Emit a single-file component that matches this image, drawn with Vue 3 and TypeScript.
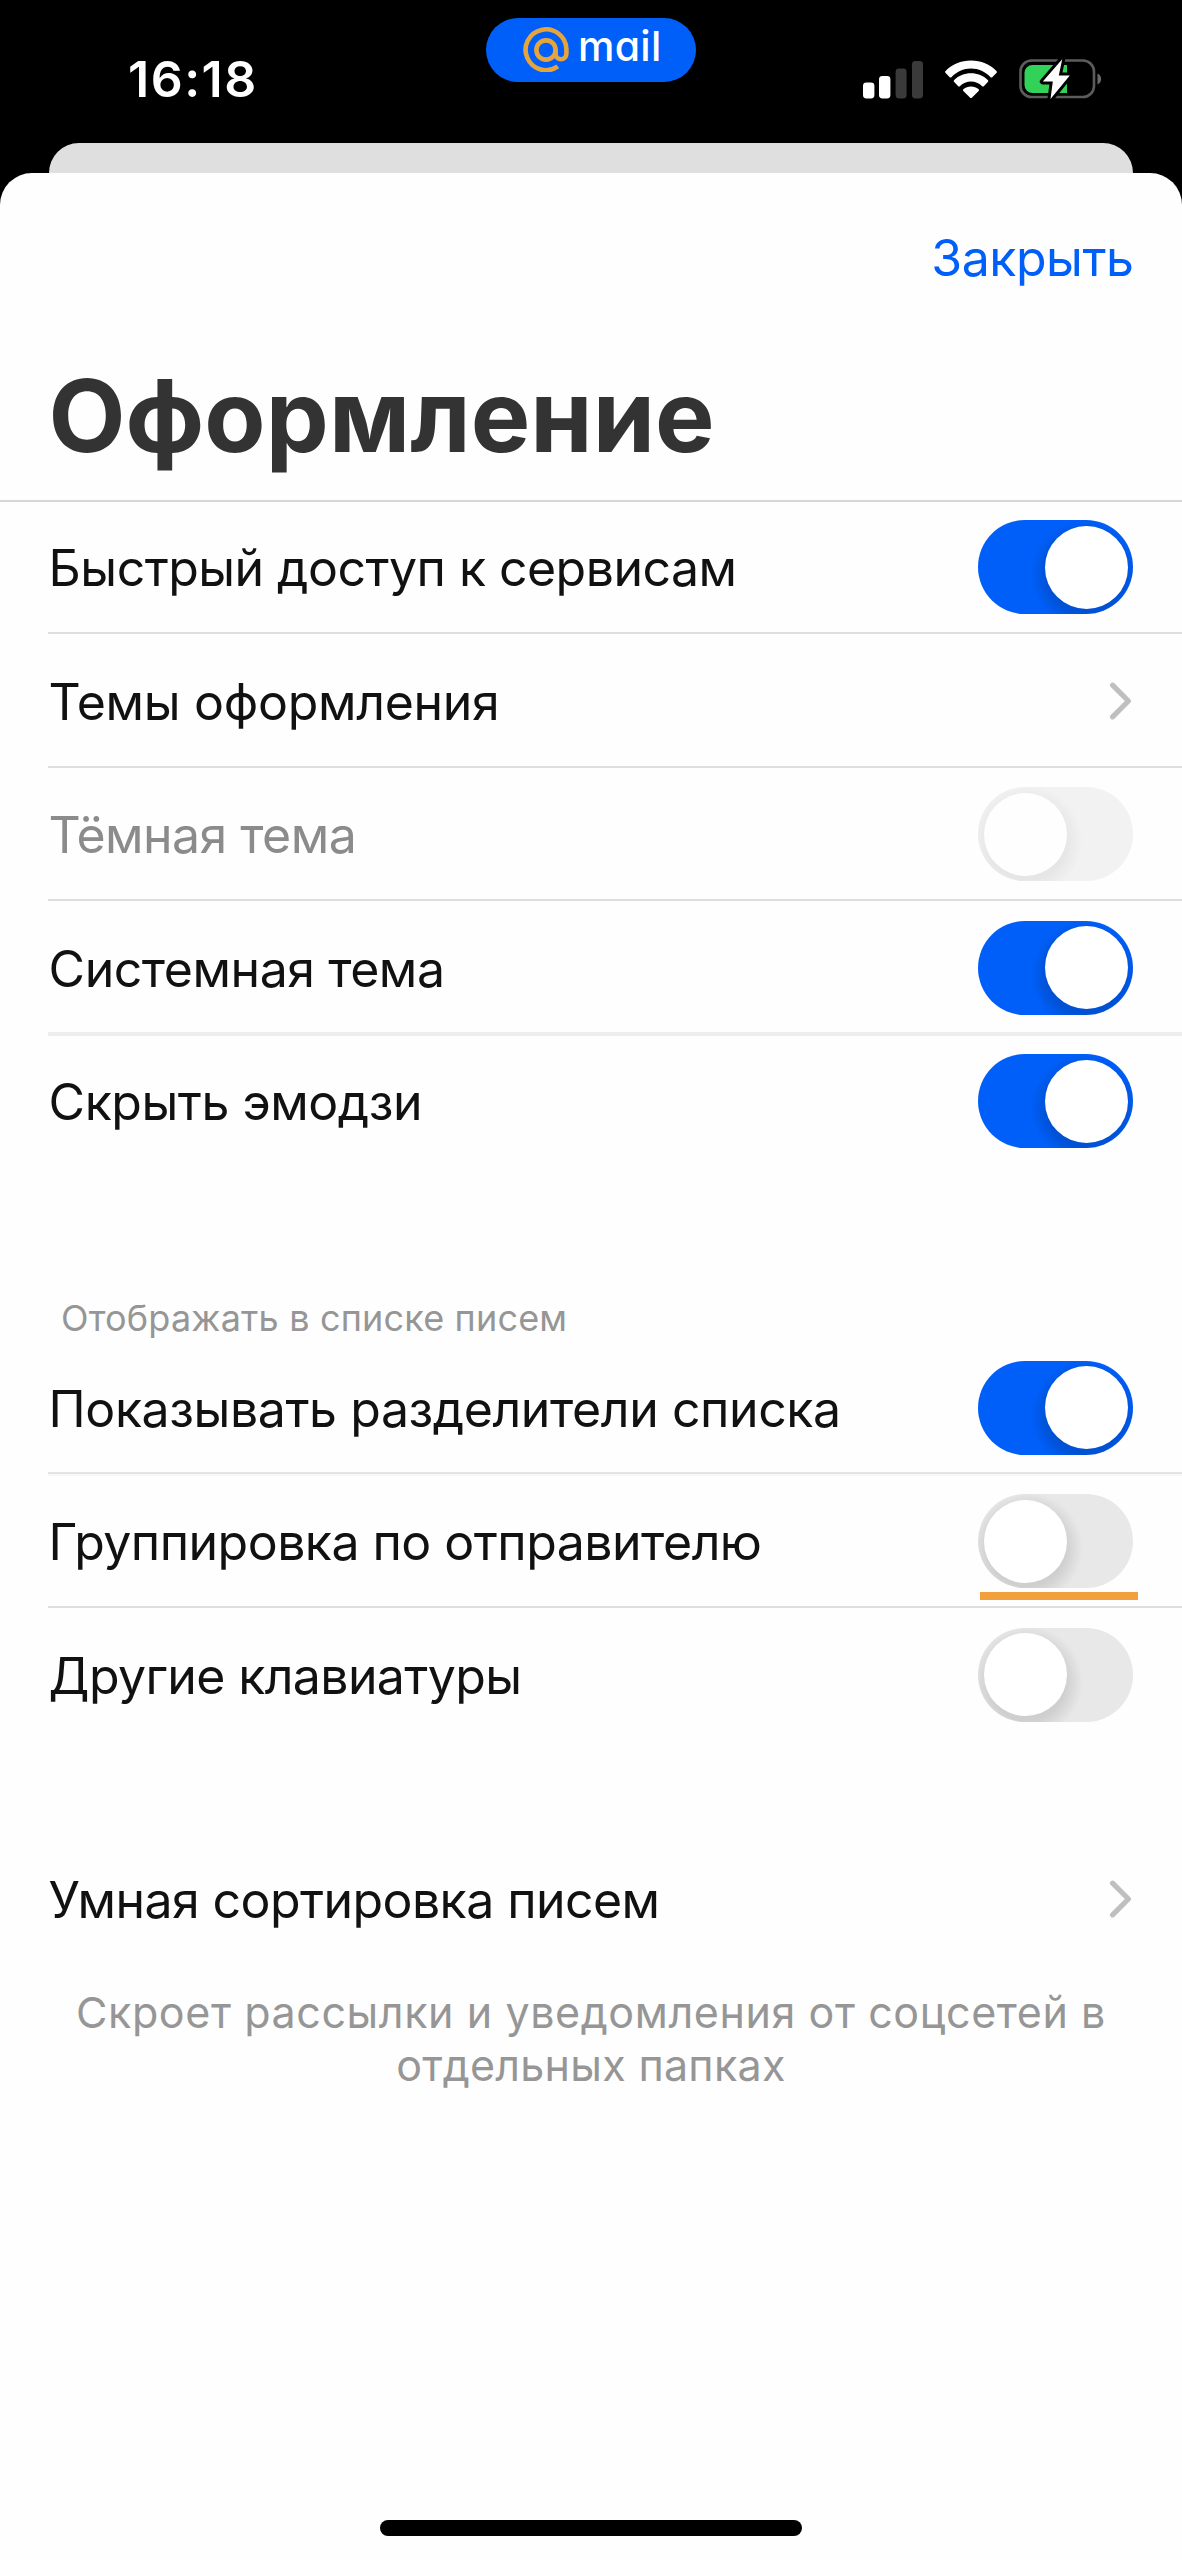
<script setup lang="ts">
import { reactive } from 'vue'

type Divider = 'thin' | 'soft' | 'faded' | 'none'

interface Row {
  label: string
  kind: 'toggle' | 'link'
  on?: boolean
  disabled?: boolean
  marked?: boolean
  divider: Divider
  tracking: number
}

const general = reactive<Row[]>([
  { label: 'Быстрый доступ к сервисам', kind: 'toggle', on: true, divider: 'thin', tracking: -0.54 },
  { label: 'Темы оформления', kind: 'link', divider: 'thin', tracking: -0.29 },
  { label: 'Тёмная тема', kind: 'toggle', on: false, disabled: true, divider: 'thin', tracking: -0.55 },
  { label: 'Системная тема', kind: 'toggle', on: true, divider: 'soft', tracking: -0.46 },
  { label: 'Скрыть эмодзи', kind: 'toggle', on: true, divider: 'none', tracking: -0.46 },
])

const list = reactive<Row[]>([
  { label: 'Показывать разделители списка', kind: 'toggle', on: true, divider: 'faded', tracking: -0.42 },
  { label: 'Группировка по отправителю', kind: 'toggle', on: false, marked: true, divider: 'thin', tracking: -0.53 },
  { label: 'Другие клавиатуры', kind: 'toggle', on: false, divider: 'none', tracking: -0.63 },
])

const sorting = reactive<Row[]>([
  { label: 'Умная сортировка писем', kind: 'link', divider: 'none', tracking: -0.57 },
])

const sections = [
  { id: 'general', caption: '', rows: general },
  { id: 'list', caption: 'Отображать в списке писем', rows: list },
  { id: 'sorting', caption: '', rows: sorting },
]

function flip(row: Row) {
  if (row.kind === 'toggle' && !row.disabled) row.on = !row.on
}
</script>

<template>
  <div class="phone">
    <header class="status">
      <span class="time">16:18</span>
      <div class="pill">
        <svg class="at" viewBox="0 0 46 46" fill="none" stroke="#e6a53c" stroke-width="4.6" stroke-linecap="butt">
          <circle cx="23" cy="24" r="9.6" />
          <path d="M32.6 24v3.8a5.4 5.4 0 0 0 10.8 0V23A20.4 20.4 0 1 0 34.8 40.4" />
        </svg>
        <span class="brand">mail</span>
      </div>
      <div class="indicators">
        <svg class="signal" viewBox="0 0 60 40">
          <rect x="0" y="23.5" width="11.4" height="16" rx="3.4" fill="#fff" />
          <rect x="16" y="17" width="11.4" height="22.5" rx="3.4" fill="#fff" />
          <rect x="32.6" y="9.5" width="11" height="30" rx="3.4" fill="#3a3a3a" />
          <rect x="49" y="2" width="11" height="37.5" rx="3.4" fill="#3a3a3a" />
        </svg>
        <svg class="wifi" viewBox="0 0 52 38" fill="#fff">
          <path d="M26 .6C16 .6 7 4.500 .6 10.900a1.500 1.500 0 0 0 0 2.100l3.900 3.900a1.500 1.500 0 0 0 2.100 0C11.700 11.900 18.500 8.600 26 8.600s14.300 3.300 19.400 8.300a1.500 1.500 0 0 0 2.100 0l3.900-3.900a1.500 1.500 0 0 0 0-2.100C45 4.500 36 .6 26 .6z" />
          <path d="M26 13.300c-6.500 0-12.400 2.500-16.800 6.600a1.500 1.500 0 0 0 0 2.200l3.800 3.800a1.500 1.500 0 0 0 2.100 0C18 23.200 21.800 21.600 26 21.600s8 1.600 10.900 4.300a1.500 1.500 0 0 0 2.100 0l3.800-3.800a1.500 1.500 0 0 0 0-2.200C38.400 15.800 32.500 13.300 26 13.300z" />
          <path d="M26 26.400c-3 0-5.400 .9-7.400 2.700a1.500 1.500 0 0 0 0 2.200l6.300 6.100a1.600 1.600 0 0 0 2.200 0l6.300-6.100a1.500 1.500 0 0 0 0-2.200C31.400 27.300 29 26.400 26 26.400z" />
        </svg>
        <svg class="battery" viewBox="0 0 84 44">
          <rect x="1.500" y="3.500" width="73.500" height="36.500" rx="11" fill="none" stroke="#5c5c5c" stroke-width="2.600" />
          <path d="M78.500 16.500c2.400 1 3.600 3 3.600 5.500s-1.200 4.500-3.600 5.500z" fill="#6a6a6a" />
          <path d="M13.500 8H48v28H13.500A8 8 0 0 1 5.500 28V16a8 8 0 0 1 8-8z" fill="#32d158" />
          <path d="M43.200 2.200 23.800 24.600h10L31.500 42 50.800 18.400h-11z" fill="#fff" stroke="#000" stroke-width="6" stroke-linejoin="round" paint-order="stroke" />
        </svg>
      </div>
    </header>

    <div class="behind"></div>

    <main class="sheet">
      <nav class="nav"><a class="close">Закрыть</a></nav>
      <h1 class="title">Оформление</h1>

      <section v-for="section in sections" :key="section.id" class="section" :class="section.id">
        <p v-if="section.caption" class="caption">{{ section.caption }}</p>
        <div
          v-for="row in section.rows"
          :key="row.label"
          class="row"
          :class="['divider-' + row.divider, { disabled: row.disabled }]"
          @click="flip(row)"
        >
          <span class="label" :style="{ letterSpacing: row.tracking + 'px' }">{{ row.label }}</span>
          <span v-if="row.kind === 'toggle'" class="toggle" :class="{ on: row.on, marked: row.marked }">
            <span class="knob"></span>
          </span>
          <svg v-else class="chevron" viewBox="0 0 24 40" fill="none" stroke="#bfbfbf" stroke-width="5.200" stroke-linecap="round" stroke-linejoin="round">
            <path d="M3.600 4.200 19.400 20 3.600 35.800" />
          </svg>
        </div>
      </section>

      <p class="hint">
        <span class="hint-first">Скроет рассылки и уведомления от соцсетей в</span>
        <span class="hint-second">отдельных папках</span>
      </p>

      <div class="home"></div>
    </main>
  </div>
</template>

<style>
body {
  background: #000;
}
</style>

<style scoped>
.phone {
  width: 1182px;
  height: 2560px;
  overflow: hidden;
  display: flex;
  flex-direction: column;
  background: #000;
  font-family: Inter, 'Liberation Sans', sans-serif;
  color: #111;
}

.status {
  flex: none;
  display: flex;
  align-items: flex-start;
  height: 142.5px;
  padding: 0 80px 0 128px;
  box-sizing: border-box;
}
.time {
  width: 358px;
  padding-top: 49px;
  font-size: 50px;
  line-height: 60px;
  font-weight: 600;
  letter-spacing: 1.5px;
  color: #fff;
}
.pill {
  display: flex;
  width: 210px;
  height: 64px;
  margin-top: 18px;
  padding-left: 37px;
  box-sizing: border-box;
  border-radius: 32px;
  background: #005ff9;
}
.at {
  width: 46px;
  height: 46px;
  margin-top: 8px;
}
.brand {
  margin: 3px 0 0 9px;
  font-size: 41px;
  line-height: 50px;
  font-weight: 500;
  letter-spacing: 0.300px;
  font-feature-settings: 'cv11';
  color: #fff;
}
.indicators {
  display: flex;
  margin-left: auto;
}
.signal {
  width: 60px;
  height: 40px;
  margin: 58.500px 22px 0 0;
}
.wifi {
  width: 52px;
  height: 38px;
  margin: 59.500px 22px 0 0;
}
.battery {
  width: 84px;
  height: 44px;
  margin: 56.500px -1px 0 0;
}

.behind {
  flex: none;
  height: 62px;
  margin: 0 49px -32px;
  border-radius: 30px 30px 0 0;
  background: #dfdfdf;
}
.sheet {
  flex: 1;
  display: flex;
  flex-direction: column;
  border-radius: 32px 32px 0 0;
  background: #fefefe;
  z-index: 1;
}

.nav {
  display: flex;
  justify-content: flex-end;
  height: 170.500px;
  padding-right: 48.500px;
}
.close {
  font-size: 50px;
  line-height: 171px;
  letter-spacing: -0.480px;
  color: #005ff9;
}
.title {
  height: 159px;
  margin: 0 0 -1.500px;
  padding-left: 48.400px;
  box-sizing: border-box;
  border-bottom: 2px solid #d6d6d6;
  font-size: 100px;
  line-height: 145px;
  font-weight: 700;
  letter-spacing: 0.090px;
  color: #333;
}

.list {
  padding-top: 127px;
}
.sorting {
  padding-top: 90.500px;
}
.caption {
  margin: 0;
  padding-left: 61px;
  font-size: 36px;
  line-height: 46.750px;
  margin-bottom: -1px;
  letter-spacing: 0.180px;
  color: #969696;
}

.row {
  display: flex;
  align-items: center;
  justify-content: space-between;
  height: 133.500px;
  margin-left: 48px;
  padding: 2px 49px 0 0;
  box-sizing: border-box;
  border-bottom: 2px solid transparent;
}
.divider-thin {
  border-bottom-color: #dedede;
}
.divider-soft {
  border-bottom: 4px solid #ededed;
  padding-top: 2px;
  height: 135px;
  margin-bottom: -1.500px;
}
.divider-faded {
  border-bottom-color: #e4e4e4;
  box-shadow: 0 2px 0 #f7f7f7;
}
.label {
  padding-top: 2px;
  padding-left: 0.600px;
  font-size: 50px;
  line-height: 60px;
  white-space: nowrap;
}
.disabled .label {
  color: #8b8b8b;
}

.toggle {
  position: relative;
  display: flex;
  width: 155px;
  height: 94px;
  padding: 5.500px;
  box-sizing: border-box;
  border-radius: 47px;
  background: radial-gradient(circle at 49px 54px, rgba(0, 0, 0, 0.110) 38px, rgba(0, 0, 0, 0) 56px) #e8e8e8;
}
.toggle.on {
  justify-content: flex-end;
  background: radial-gradient(circle at 107px 54px, rgba(0, 0, 0, 0.150) 38px, rgba(0, 0, 0, 0) 54px) #005ff9;
}
.knob {
  width: 83px;
  height: 83px;
  border-radius: 50%;
  background: #fff;
}
.disabled .toggle {
  opacity: 0.500;
}
.marked::after {
  content: '';
  position: absolute;
  left: 2px;
  top: 98px;
  width: 158px;
  height: 8px;
  background: #f2a03c;
}

.chevron {
  width: 24px;
  height: 40px;
}

.hint {
  display: flex;
  flex-direction: column;
  align-items: center;
  margin: 20.500px 0 0;
  font-size: 43px;
  line-height: 53.700px;
  color: #969696;
}
.hint-first {
  letter-spacing: 0.590px;
}
.hint-second {
  letter-spacing: 0.280px;
}

.home {
  width: 422px;
  height: 16px;
  margin: auto auto 24px;
  border-radius: 8px;
  background: #000;
}
</style>
